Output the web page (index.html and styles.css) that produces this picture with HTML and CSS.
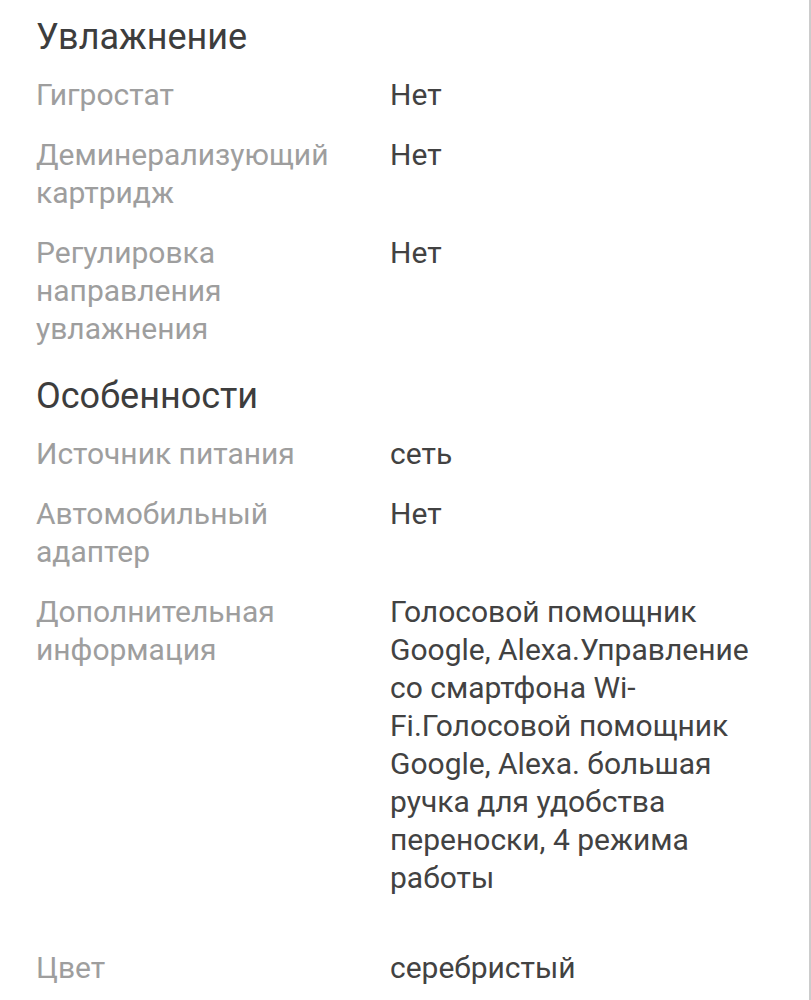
FILE: index.html
```html
<!DOCTYPE html>
<html lang="ru">
<head>
<meta charset="utf-8">
<title>Характеристики</title>
<link rel="stylesheet" href="styles.css">
</head>
<body>
<div class="page">
  <section class="group">
    <h2 class="group-title">Увлажнение</h2>
    <div class="row"><div class="label">Гигростат</div><div class="value">Нет</div></div>
    <div class="row"><div class="label">Деминерализующий картридж</div><div class="value">Нет</div></div>
    <div class="row"><div class="label">Регулировка направления увлажнения</div><div class="value">Нет</div></div>
  </section>
  <section class="group">
    <h2 class="group-title">Особенности</h2>
    <div class="row"><div class="label">Источник питания</div><div class="value">сеть</div></div>
    <div class="row"><div class="label">Автомобильный адаптер</div><div class="value">Нет</div></div>
    <div class="row"><div class="label">Дополнительная информация</div><div class="value">Голосовой помощник Google, Alexa.Управление со смартфона Wi-Fi.Голосовой помощник Google, Alexa. большая ручка для удобства переноски, 4 режима работы</div></div>
    <div class="row row-spaced"><div class="label">Цвет</div><div class="value">серебристый</div></div>
  </section>
</div>
</body>
</html>
```

FILE: styles.css
```css
html, body {
  margin: 0;
  padding: 0;
  background: #ffffff;
}

body {
  font-family: Roboto, "Noto Sans", "Liberation Sans", sans-serif;
  -webkit-font-smoothing: antialiased;
}

.page {
  box-sizing: border-box;
  width: 811px;
  min-height: 1000px;
  padding: 15px 36px 0 36px;
  border-right: 2px solid #cccccc;
}

.group-title {
  margin: 0 0 6px 0;
  font-size: 36px;
  line-height: 44px;
  font-weight: 400;
  color: #3d3d3d;
}

.group + .group .group-title {
  margin-top: 15px;
}

.row {
  display: grid;
  grid-template-columns: 330px 1fr;
  column-gap: 24px;
  padding: 11px 0;
  font-size: 30px;
  line-height: 38px;
}

.row-spaced {
  margin-top: 30px;
}

.label {
  color: #9e9e9e;
}

.value {
  color: #424242;
}
```
